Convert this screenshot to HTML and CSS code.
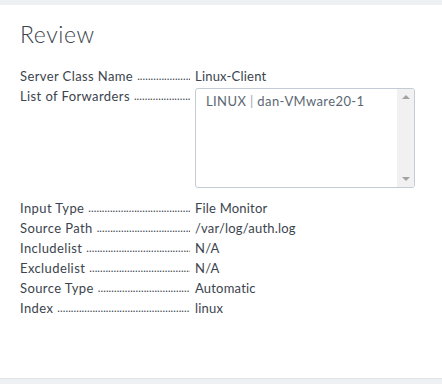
FILE: index.html
```html
<!DOCTYPE html>
<html>
<head>
  <link rel="stylesheet" href="styles.css">
</head>
<body>
  <section class="panel">
    <h1 class="title">Review</h1>

    <div class="review">
      <div class="row">
        <div class="label"><span>Server Class Name</span><span class="dots"></span></div>
        <div class="value">Linux-Client</div>
      </div>
      <div class="row row-list">
        <div class="label"><span>List of Forwarders</span><span class="dots"></span></div>
        <div class="listbox">
          <div class="list-items">
            <div class="item">LINUX <span class="sep">|</span> dan-VMware20-1</div>
          </div>
          <div class="scrollbar">
            <span class="arrow up"></span>
            <span class="arrow down"></span>
          </div>
        </div>
      </div>
      <div class="row">
        <div class="label"><span>Input Type</span><span class="dots"></span></div>
        <div class="value">File Monitor</div>
      </div>
      <div class="row">
        <div class="label"><span>Source Path</span><span class="dots"></span></div>
        <div class="value">/var/log/auth.log</div>
      </div>
      <div class="row">
        <div class="label"><span>Includelist</span><span class="dots"></span></div>
        <div class="value">N/A</div>
      </div>
      <div class="row">
        <div class="label"><span>Excludelist</span><span class="dots"></span></div>
        <div class="value">N/A</div>
      </div>
      <div class="row">
        <div class="label"><span>Source Type</span><span class="dots"></span></div>
        <div class="value">Automatic</div>
      </div>
      <div class="row">
        <div class="label"><span>Index</span><span class="dots"></span></div>
        <div class="value">linux</div>
      </div>
    </div>
  </section>
</body>
</html>
```

FILE: styles.css
```css
* {
  box-sizing: border-box;
  margin: 0;
  padding: 0;
}

body {
  background-color: #eef1f3;
  font-family: "Lato", "Open Sans", sans-serif;
  color: #3c444d;
  height: 384px;
  overflow: hidden;
  padding-top: 5px;
}

.panel {
  background-color: #ffffff;
  height: 374px;
  border-bottom: 1px solid #e1e5e8;
  padding: 15px 20px 0 20px;
}

.title {
  font-size: 23px;
  font-weight: 300;
  line-height: 28px;
  color: #3c444d;
  letter-spacing: 0.6px;
}

.review {
  margin-top: 18px;
  font-size: 13px;
  letter-spacing: 0.4px;
}

.row {
  display: flex;
  line-height: 20px;
}

.label {
  width: 175px;
  display: flex;
  overflow: hidden;
  white-space: nowrap;
}

.dots {
  flex: 1;
  overflow: hidden;
  margin-left: 4px;
  margin-right: 5px;
  font-size: 11px;
  letter-spacing: 0.1px;
}

.dots::after {
  content: "..............................................................................................";
}

.value {
  white-space: nowrap;
  letter-spacing: 0.2px;
}

.row-list {
  height: 112px;
}

.listbox {
  margin-top: 2px;
  width: 220px;
  height: 100px;
  border: 1px solid #c3cbd4;
  border-radius: 3px;
  display: flex;
  overflow: hidden;
}

.list-items {
  flex: 1;
  padding: 2px 10px;
  color: #5c6773;
}

.sep {
  color: #a0a8b0;
}

.scrollbar {
  width: 17px;
  background-color: #f1f1f1;
  display: flex;
  flex-direction: column;
  justify-content: space-between;
  align-items: center;
  padding: 6px 0;
}

.arrow {
  width: 0;
  height: 0;
  border-left: 4px solid transparent;
  border-right: 4px solid transparent;
}

.arrow.up {
  border-bottom: 4px solid #a3a3a3;
}

.arrow.down {
  border-top: 4px solid #a3a3a3;
}
```
